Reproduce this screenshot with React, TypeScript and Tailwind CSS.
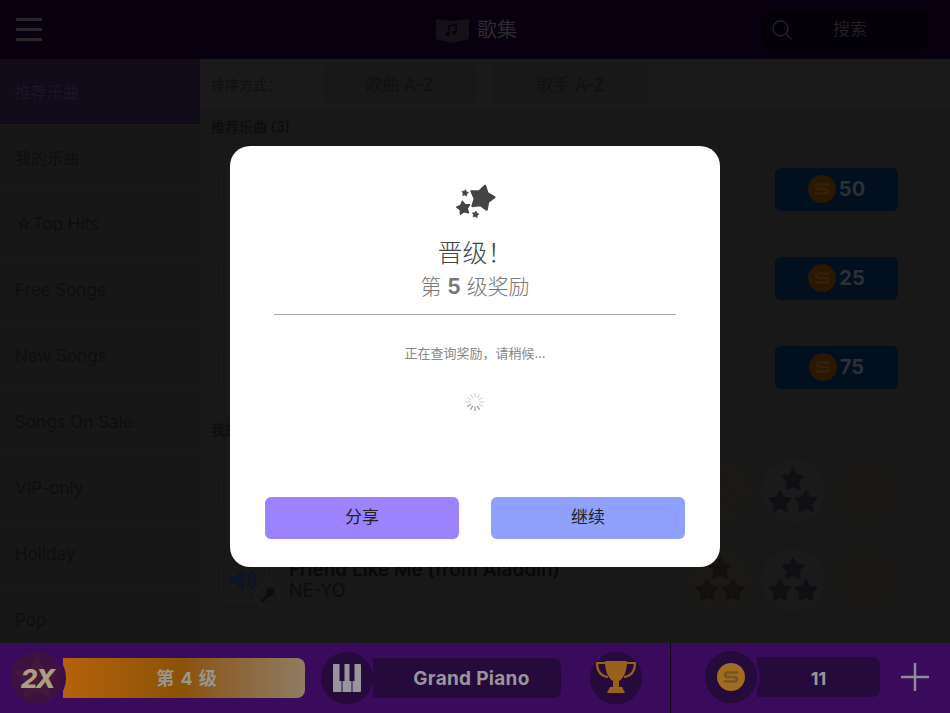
import { ReactNode } from "react";

const font = "font-['Inter','Noto_Sans_CJK_SC',sans-serif]";

const categories = [
  "推荐乐曲",
  "我的乐曲",
  "☆Top Hits",
  "Free Songs",
  "New Songs",
  "Songs On Sale",
  "VIP-only",
  "Holiday",
  "Pop",
];

const starPoints = (cx: number, cy: number, r: number, rot: number, inner: number) => {
  const pts: string[] = [];
  for (let i = 0; i < 10; i++) {
    const rad = i % 2 === 0 ? r : r * inner;
    const a = ((rot + i * 36 - 90) * Math.PI) / 180;
    pts.push(`${(cx + rad * Math.cos(a)).toFixed(2)},${(cy + rad * Math.sin(a)).toFixed(2)}`);
  }
  return pts.join(" ");
};

const Star = ({ cx, cy, r, rot = 0, fill, inner = 0.5 }: { cx: number; cy: number; r: number; rot?: number; fill: string; inner?: number }) => (
  <polygon points={starPoints(cx, cy, r, rot, inner)} fill={fill} stroke={fill} strokeWidth={r * 0.18} strokeLinejoin="round" />
);

const Coin = ({ size, bg, fg }: { size: number; bg: string; fg: string }) => (
  <svg width={size} height={size} viewBox="0 0 28 28" className="shrink-0">
    <circle cx="14" cy="14" r="14" fill={bg} />
    <path d="M20 9.5H10.5a1.8 1.8 0 0 0 0 4.5h7a1.8 1.8 0 0 1 0 4.5H8" fill="none" stroke={fg} strokeWidth="2.6" strokeLinecap="round" />
  </svg>
);

const PriceButton = ({ price }: { price: number }) => (
  <div className="flex h-[43px] w-[123px] items-center justify-center gap-[3px] rounded-md bg-[#020f1e]">
    <Coin size={28} bg="#2a1803" fg="#362108" />
    <span className="text-[20px] font-bold text-[#2c3036]">{price}</span>
  </div>
);

const RatingCircles = ({ first }: { first: string }) => (
  <div className="flex gap-[9px]">
    <div className="flex h-16 w-16 items-center justify-center rounded-full bg-[#1a1916]">
      <Stars fill={first} />
    </div>
    <div className="flex h-16 w-16 items-center justify-center rounded-full bg-[#1a1a1a]">
      <Stars fill="#0f1013" />
    </div>
    <div className="h-16 w-16 rounded-full bg-[#191814]" />
  </div>
);

const Stars = ({ fill }: { fill: string }) => (
  <svg width="54" height="50" viewBox="0 0 54 50">
    <Star cx={27} cy={14} r={11} fill={fill} />
    <Star cx={14} cy={36} r={11} fill={fill} />
    <Star cx={40} cy={36} r={11} fill={fill} />
  </svg>
);

const SpeakerBox = () => (
  <div className="relative flex h-11 w-[46px] items-center justify-center rounded-md border border-[#1d1d1d]">
    <svg width="30" height="26" viewBox="0 0 30 26" fill="#0c1528">
      <path d="M1 9h6l8-7v22l-8-7H1z" />
      <path d="M19 8c2 3 2 7 0 10M23 5c4 5 4 11 0 16" fill="none" stroke="#0c1528" strokeWidth="2.6" strokeLinecap="round" />
    </svg>
    <div className="absolute left-[33px] top-[24px] flex h-[25px] w-[25px] items-center justify-center rounded-full border border-[#1f1f1f] bg-[#181818]">
      <svg width="17" height="17" viewBox="0 0 17 17" fill="#0c0c0c">
        <circle cx="11.5" cy="5" r="4" />
        <path d="M8.5 6.5l2 2L4 15.5l-2-1.500z" />
      </svg>
    </div>
  </div>
);

const SongRow = ({ children, right }: { children?: ReactNode; right: ReactNode }) => (
  <div className="flex h-[89px] shrink-0 items-center justify-between border-b border-[#1b1b1b] pl-[21px] pr-[52px]">
    <div className="flex items-center gap-[22px]">
      <SpeakerBox />
      {children}
    </div>
    {right}
  </div>
);

const SortButton = ({ label }: { label: string }) => (
  <div className="flex h-[38px] w-[155px] items-center justify-center rounded-md bg-[#181818] pt-[3px] text-[17px] text-[#101010]">
    {label}
  </div>
);

const BarCircle = ({ children, bg = "bg-[#260a3c]" }: { children: ReactNode; bg?: string }) => (
  <div className={`z-10 flex h-[58px] w-[58px] shrink-0 items-center justify-center rounded-full border-[3px] border-[#3a0a5c] ${bg}`}>
    {children}
  </div>
);

const LoadingSpinner = () => (
  <svg width="20" height="20" viewBox="0 0 20 20">
    {Array.from({ length: 12 }).map((_, i) => (
      <line
        key={i}
        x1="10"
        y1="1"
        x2="10"
        y2="5.500"
        stroke={i > 4 && i < 9 ? "#9a9a9a" : "#d8d8d8"}
        strokeWidth="1.300"
        transform={`rotate(${i * 30} 10 10)`}
      />
    ))}
  </svg>
);

export default function App() {
  return (
    <div className={`relative flex h-[713px] w-[950px] flex-col overflow-hidden bg-[#181818] ${font}`}>
      {/* top bar */}
      <header className="flex h-[59px] shrink-0 items-center justify-between bg-[#08000f] pl-4 pr-[22px]">
        <div className="flex w-[26px] flex-col gap-[7px]">
          <div className="h-[3px] bg-[#27242a]" />
          <div className="h-[3px] bg-[#27242a]" />
          <div className="h-[3px] bg-[#27242a]" />
        </div>
        <div className="ml-[150px] flex items-center gap-2">
          <svg width="33" height="26" viewBox="0 0 33 26" fill="#141118">
            <path d="M0 2l16.500 2L33 2v20l-16.500 4L0 22z" />
            <path d="M13 17V9l7-1.500v8" fill="none" stroke="#08000f" strokeWidth="1.500" />
            <circle cx="11.500" cy="17" r="2" fill="#08000f" />
            <circle cx="18.500" cy="15.500" r="2" fill="#08000f" />
          </svg>
          <span className="text-[20px] text-[#2b2a2c]">歌集</span>
        </div>
        <div className="flex h-[39px] w-[167px] items-center rounded-md bg-[#020006] pl-[10px]">
          <svg width="22" height="22" viewBox="0 0 22 22" fill="none" stroke="#232226" strokeWidth="1.500">
            <circle cx="9.500" cy="9.500" r="7.500" />
            <path d="M15 15l5 5" strokeLinecap="round" />
          </svg>
          <span className="ml-[40px] text-[17px] text-[#1f1e21]">搜索</span>
        </div>
      </header>

      <div className="flex min-h-0 flex-1">
        {/* categories */}
        <nav className="flex w-[200px] shrink-0 flex-col bg-[#171717]">
          {categories.map((name, i) => (
            <div
              key={name}
              className={`flex h-[66px] shrink-0 items-center border-b border-[#1a1a1a] pl-[15px] ${
                i === 0
                  ? "bg-[#110b1a] text-[16px] text-[#1a1625]"
                  : i === 1
                    ? "text-[16px] text-[#0e0e0e]"
                    : "pt-[3px] text-[17px] text-[#0e0e0e]"
              }`}
            >
              {name}
            </div>
          ))}
        </nav>

        {/* song list */}
        <main className="flex min-w-0 flex-1 flex-col overflow-hidden">
          <div className="flex h-[50px] shrink-0 items-center gap-4 bg-[#1a1a1a] pl-[11px]">
            <span className="mr-[31px] w-[64px] text-[14px] whitespace-nowrap text-[#0f0f0f]">{"排序方式\uFF1A"}</span>
            <SortButton label="歌曲 A-Z" />
            <SortButton label="歌手 A-Z" />
          </div>
          <div className="flex h-9 shrink-0 items-center pb-[2px] pl-[11px] text-[14px] font-medium text-[#0c0c0c]">推荐乐曲 (3)</div>
          <SongRow right={<PriceButton price={50} />} />
          <SongRow right={<PriceButton price={25} />} />
          <SongRow right={<PriceButton price={75} />} />
          <div className="flex h-[35px] shrink-0 items-center pl-[11px] text-[14px] font-medium text-[#0c0c0c]">我的乐曲</div>
          <SongRow right={<RatingCircles first="#1a1916" />} />
          <SongRow right={<RatingCircles first="#14100e" />}>
            <div className="flex flex-col">
              <span className="text-[19px] leading-[21px] font-semibold whitespace-nowrap text-[#080808]">Friend Like Me (from Aladdin)</span>
              <span className="text-[18px] leading-[21px] text-[#0c0c0c]">NE-YO</span>
            </div>
          </SongRow>
        </main>
      </div>

      {/* bottom bar */}
      <footer className="flex h-[70px] shrink-0 items-center bg-[#3a0a5c]">
        <div className="flex w-[671px] shrink-0 items-center self-stretch border-r border-[#14051f] pl-2">
          <BarCircle bg="bg-[#3d1240]">
            <div className="relative flex items-center justify-center">
              <svg width="44" height="44" viewBox="0 0 44 44" className="absolute">
                <Star cx={22} cy={23} r={20} fill="#431838" />
              </svg>
              <span className="relative text-[26px] font-extrabold italic tracking-[-2px] text-[#ad9e82]">2X</span>
            </div>
          </BarCircle>
          <div className="-ml-[3px] flex h-10 w-[242px] items-center justify-center rounded-r-lg bg-gradient-to-r from-[#b5620a] via-[#8a5208] to-[#8f7c62] pl-[6px] text-[18px] font-bold tracking-[1px] text-[#98958f]">
            第 4 级
          </div>
          <div className="ml-[13px]">
            <BarCircle>
              <svg width="32" height="32" viewBox="0 0 32 32">
                <path d="M3 2h26a1 1 0 0 1 1 1v26a1 1 0 0 1-1 1H3a1 1 0 0 1-1-1V3a1 1 0 0 1 1-1z" fill="#98969c" />
                <path d="M11 2v28M21 2v28" stroke="#260a3c" strokeWidth="1" />
                <rect x="8.500" y="2" width="5" height="17" fill="#260a3c" />
                <rect x="18.500" y="2" width="5" height="17" fill="#260a3c" />
              </svg>
            </BarCircle>
          </div>
          <div className="-ml-[3px] flex h-10 w-[188px] items-center justify-center rounded-r-lg bg-[#260a3c] pl-[9px] pt-[2px] text-[19px] font-bold tracking-[0.3px] text-[#98969c]">
            Grand Piano
          </div>
          <div className="ml-[26px]">
            <BarCircle>
              <svg width="44" height="36" viewBox="0 0 42 36">
                <path d="M10 3H2c0 8 4 13 11 14M32 3h8c0 8-4 13-11 14" fill="none" stroke="#9a611c" strokeWidth="2.200" />
                <path d="M10 1h22c0 10-3 17-8 20v6h-6v-6C13 18 10 11 10 1z" fill="#9a611c" />
                <path d="M15 27h12l3 6H12z" fill="#9a611c" />
              </svg>
            </BarCircle>
          </div>
        </div>
        <div className="mb-[2px] flex flex-1 items-center pl-[31px]">
          <BarCircle>
            <Coin size={28} bg="#a06c24" fg="#7a5420" />
          </BarCircle>
          <div className="-ml-[3px] flex h-10 w-[123px] items-center justify-center rounded-r-lg bg-[#260a3c] pt-[3px] text-[18px] font-bold text-[#98969c]">
            11
          </div>
          <svg width="28" height="28" viewBox="0 0 28 28" className="ml-[21px]" stroke="#8e8c94" strokeWidth="2.500">
            <path d="M14 0v28M0 14h28" />
          </svg>
        </div>
      </footer>

      {/* level up dialog */}
      <div className="absolute inset-0 flex items-center justify-center">
        <div className="flex h-[421px] w-[490px] flex-col items-center rounded-[20px] bg-white px-[35px] pt-[37px]">
          <svg width="42" height="38" viewBox="0 0 42 38">
            <Star cx={28} cy={15} r={12.500} rot={14} inner={0.58} fill="#444444" />
            <Star cx={9.500} cy={25} r={7} rot={-10} inner={0.55} fill="#444444" />
            <Star cx={11} cy={10} r={3.500} rot={10} inner={0.55} fill="#444444" />
            <Star cx={21.500} cy={31.500} r={3.500} rot={10} inner={0.55} fill="#444444" />
          </svg>
          <div className="mt-4 text-[25px] leading-[32px] font-light text-[#444444]">{"晋级\uFF01"}</div>
          <div className="mt-1 text-[21px] leading-[28px] font-light text-[#777777]">
            第 <span className="font-bold">5</span> 级奖励
          </div>
          <div className="mt-[13px] h-px w-[402px] bg-[#aaaaaa]" />
          <div className="mt-[30px] text-[13px] leading-[16px] text-[#888888]">{"正在查询奖励\uFF0C请稍候..."}</div>
          <div className="mt-[31px]">
            <LoadingSpinner />
          </div>
          <div className="mt-[85px] flex w-full justify-between">
            <button className="h-[42px] w-[194px] rounded-md bg-[#9b82ff] text-[17px] text-[#222222]">分享</button>
            <button className="h-[42px] w-[194px] rounded-md bg-[#8fa1fd] text-[17px] text-[#222222]">继续</button>
          </div>
        </div>
      </div>
    </div>
  );
}
